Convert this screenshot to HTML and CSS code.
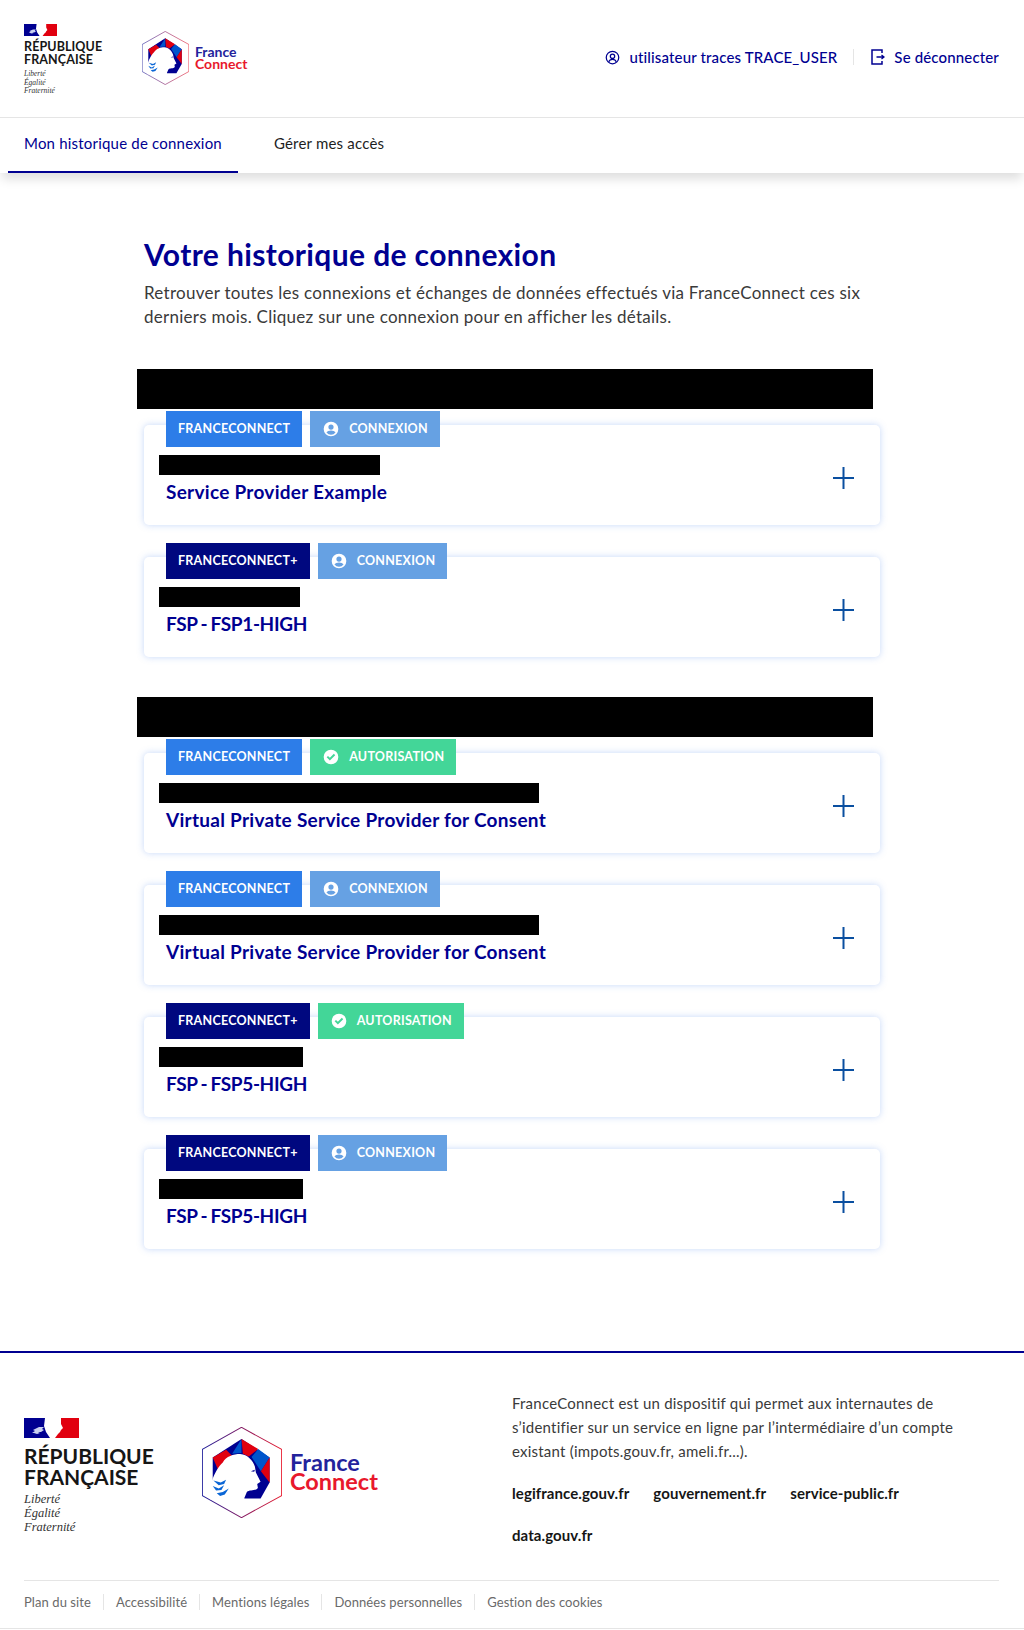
FILE: index.html
```html
<!DOCTYPE html>
<html lang="fr">
<head>
    <meta charset="utf-8">
    <title>Votre historique de connexion - FranceConnect</title>
    <link rel="stylesheet" href="styles.css">
</head>
<body>
    <svg class="defs" width="0" height="0">
        <defs>
            <linearGradient id="hexStroke" x1="0" y1="0" x2="1" y2="0">
                <stop offset="0" stop-color="#1c1c9a"/>
                <stop offset="1" stop-color="#e8182c"/>
            </linearGradient>
            <symbol id="flag" viewBox="0 0 55 20">
                <path d="M0 0h21l-1 8 2 6 4 6H0z" fill="#000091"/>
                <path d="M37 0h18v20H31l3-4 2-2 1-2 2-2-2-4z" fill="#e1000f"/>
                <path d="M11 11l4-2 5 0-2 2 2 1-3 2-3 0 2 1-3 1-3-1-2 0 3-2-2-1z" fill="#c9d0f0"/>
            </symbol>
            <symbol id="fcHex" viewBox="-10 -16 239 272">
                <polygon points="108,-15 228,51 228,189 108,255 -9,189 -9,51" fill="none" stroke="url(#hexStroke)" stroke-width="3"/>
                <polygon points="108,20 192,75 192,150 165,198 118,198 22,150 22,75" fill="#000091"/>
                <polygon points="22,75 62,52 82,72 50,92 38,112" fill="#e1000f"/>
                <polygon points="108,20 80,64 108,62" fill="#0055cc"/>
                <polygon points="108,20 158,50 130,72 112,64" fill="#e1000f"/>
                <polygon points="158,50 192,75 166,116 138,74" fill="#0055cc"/>
                <polygon points="192,75 192,150 166,116" fill="#e1000f"/>
                <path d="M20 144 C28 122 40 100 52 90 C62 72 84 65 104 65 C126 67 142 84 148 102 L151 120 L165 148 L155 154 L157 166 C150 176 132 170 124 178 L114 202 L16 202 Z" fill="#fff"/>
                <path d="M24 144 L46 150 L62 142 L56 154 L40 158 Z M22 160 L40 168 L56 158 L48 172 L32 174 Z M34 182 L52 178 L70 168 L58 186 L44 190 Z" fill="#0a66d6"/>
                <path d="M136 116 L148 112 L146 118 Z" fill="#000091"/>
            </symbol>
            <symbol id="userCircle" viewBox="0 0 24 24">
                <path fill="#fff" d="M12 1a11 11 0 1 0 0 22 11 11 0 0 0 0-22zm0 4.200a3.900 3.900 0 1 1 0 7.800 3.900 3.900 0 0 1 0-7.800zm0 15.400a8.600 8.600 0 0 1-6.800-3.400c.9-2 3.900-3 6.800-3s5.900 1 6.800 3a8.600 8.600 0 0 1-6.800 3.400z"/>
            </symbol>
            <symbol id="checkCircle" viewBox="0 0 24 24">
                <path fill="#fff" d="M12 1a11 11 0 1 0 0 22 11 11 0 0 0 0-22zm-1.700 16.200l-4.800-4.800 2-2 2.800 2.800 6-6 2 2z"/>
            </symbol>
            <symbol id="plus" viewBox="0 0 22 22">
                <path d="M0 11h21M10.500 0v22" fill="none" stroke="#0a4fa0" stroke-width="2"/>
            </symbol>
        </defs>
    </svg>

    <header class="top-header">
        <div class="brand">
            <div class="marianne">
                <svg class="flag"><use href="#flag"/></svg>
                <div class="rf-name">RÉPUBLIQUE<br>FRANÇAISE</div>
                <div class="rf-motto">Liberté<br>Égalité<br>Fraternité</div>
            </div>
            <svg class="hex"><use href="#fcHex"/></svg>
            <div class="fc-name"><span class="fc-france">France</span><span class="fc-connect">Connect</span></div>
        </div>
        <div class="user-box">
            <a class="user-link" href="#">
                <svg class="user-icon" viewBox="0 0 24 24">
                    <circle cx="12" cy="12" r="10" fill="none" stroke="#000091" stroke-width="2"/>
                    <circle cx="12" cy="10" r="3.500" fill="none" stroke="#000091" stroke-width="2"/>
                    <path d="M6 19c1-3 3.500-4 6-4s5 1 6 4" fill="none" stroke="#000091" stroke-width="2"/>
                </svg>
                utilisateur traces TRACE_USER
            </a>
            <span class="user-sep"></span>
            <a class="user-link" href="#">
                <svg class="logout-icon" viewBox="0 0 14 16">
                    <path d="M11 4V1H1v14h10v-3" fill="none" stroke="#000091" stroke-width="1.500"/>
                    <path d="M5.500 8H13M10.500 6l2.500 2-2.500 2" fill="none" stroke="#000091" stroke-width="1.300"/>
                </svg>
                Se déconnecter
            </a>
        </div>
    </header>

    <nav class="tabs">
        <a class="tab tab-active" href="#">Mon historique de connexion</a>
        <a class="tab" href="#">Gérer mes accès</a>
    </nav>

    <main class="content">
        <h1>Votre historique de connexion</h1>
        <p class="intro">Retrouver toutes les connexions et échanges de données effectués via FranceConnect ces six derniers mois. Cliquez sur une connexion pour en afficher les détails.</p>

        <div class="redacted month-bar"></div>
        <section class="card">
            <div class="card-body">
                <div class="badges">
                    <span class="badge badge-fc">FranceConnect</span>
                    <span class="badge badge-login"><svg class="badge-icon"><use href="#userCircle"/></svg>Connexion</span>
                </div>
                <div class="redacted date-bar w-short"></div>
                <div class="sp-name">Service Provider Example</div>
            </div>
            <svg class="plus"><use href="#plus"/></svg>
        </section>
        <section class="card">
            <div class="card-body">
                <div class="badges">
                    <span class="badge badge-fcplus">FranceConnect+</span>
                    <span class="badge badge-login"><svg class="badge-icon"><use href="#userCircle"/></svg>Connexion</span>
                </div>
                <div class="redacted date-bar w-tiny"></div>
                <div class="sp-name sp-fsp">FSP - FSP1-HIGH</div>
            </div>
            <svg class="plus"><use href="#plus"/></svg>
        </section>

        <div class="redacted month-bar"></div>
        <section class="card">
            <div class="card-body">
                <div class="badges">
                    <span class="badge badge-fc">FranceConnect</span>
                    <span class="badge badge-auth"><svg class="badge-icon"><use href="#checkCircle"/></svg>Autorisation</span>
                </div>
                <div class="redacted date-bar w-long"></div>
                <div class="sp-name">Virtual Private Service Provider for Consent</div>
            </div>
            <svg class="plus"><use href="#plus"/></svg>
        </section>
        <section class="card">
            <div class="card-body">
                <div class="badges">
                    <span class="badge badge-fc">FranceConnect</span>
                    <span class="badge badge-login"><svg class="badge-icon"><use href="#userCircle"/></svg>Connexion</span>
                </div>
                <div class="redacted date-bar w-long"></div>
                <div class="sp-name">Virtual Private Service Provider for Consent</div>
            </div>
            <svg class="plus"><use href="#plus"/></svg>
        </section>
        <section class="card">
            <div class="card-body">
                <div class="badges">
                    <span class="badge badge-fcplus">FranceConnect+</span>
                    <span class="badge badge-auth"><svg class="badge-icon"><use href="#checkCircle"/></svg>Autorisation</span>
                </div>
                <div class="redacted date-bar w-mid"></div>
                <div class="sp-name sp-fsp">FSP - FSP5-HIGH</div>
            </div>
            <svg class="plus"><use href="#plus"/></svg>
        </section>
        <section class="card">
            <div class="card-body">
                <div class="badges">
                    <span class="badge badge-fcplus">FranceConnect+</span>
                    <span class="badge badge-login"><svg class="badge-icon"><use href="#userCircle"/></svg>Connexion</span>
                </div>
                <div class="redacted date-bar w-mid"></div>
                <div class="sp-name sp-fsp">FSP - FSP5-HIGH</div>
            </div>
            <svg class="plus"><use href="#plus"/></svg>
        </section>
    </main>

    <footer class="site-footer">
        <div class="footer-top">
            <div class="footer-brand">
                <div class="marianne-big">
                    <svg class="flag-big"><use href="#flag"/></svg>
                    <div class="rf-name-big">RÉPUBLIQUE<br>FRANÇAISE</div>
                    <div class="rf-motto-big">Liberté<br>Égalité<br>Fraternité</div>
                </div>
                <svg class="hex-big"><use href="#fcHex"/></svg>
                <div class="fc-name-big"><span class="fc-france">France</span><span class="fc-connect">Connect</span></div>
            </div>
            <div class="footer-about">
                <p>FranceConnect est un dispositif qui permet aux internautes de s’identifier sur un service en ligne par l’intermédiaire d’un compte existant (impots.gouv.fr, ameli.fr...).</p>
                <div class="footer-links">
                    <a href="#">legifrance.gouv.fr</a>
                    <a href="#">gouvernement.fr</a>
                    <a href="#">service-public.fr</a>
                    <a href="#">data.gouv.fr</a>
                </div>
            </div>
        </div>
        <ul class="footer-bottom">
            <li><a href="#">Plan du site</a></li>
            <li><a href="#">Accessibilité</a></li>
            <li><a href="#">Mentions légales</a></li>
            <li><a href="#">Données personnelles</a></li>
            <li><a href="#">Gestion des cookies</a></li>
        </ul>
    </footer>
</body>
</html>
```

FILE: styles.css
```css
html,
body {
    margin: 0;
    padding: 0;
}

body {
    background: #fff;
    color: #3a3a3a;
    font-family: "Lato", "Liberation Sans", sans-serif;
}

a {
    color: inherit;
    text-decoration: none;
}

.defs {
    display: block;
    height: 0;
}

/* Header */
.top-header {
    height: 117px;
    display: flex;
    justify-content: space-between;
    border-bottom: 1px solid #e5e5e5;
    padding: 0 25px 0 24px;
}

.brand {
    display: flex;
    align-items: flex-start;
}

.marianne {
    width: 118px;
    padding-top: 24px;
}

.flag {
    display: block;
    width: 33px;
    height: 12px;
}

.rf-name {
    margin-top: 4px;
    font-size: 12.5px;
    font-weight: 700;
    line-height: 13px;
    letter-spacing: 0.1px;
    color: #161616;
}

.rf-motto {
    margin-top: 4px;
    font-family: "Liberation Serif", serif;
    font-style: italic;
    font-size: 7.5px;
    line-height: 8.500px;
    color: #333;
}

.hex {
    width: 47px;
    height: 54px;
    margin-top: 31px;
}

.fc-name {
    margin: 46px 0 0 6px;
    font-size: 14px;
    font-weight: 700;
    line-height: 12px;
}

.fc-france,
.fc-connect {
    display: block;
}

.fc-france {
    color: #23239c;
}

.fc-connect {
    color: #e8182c;
}

.user-box {
    display: flex;
    align-items: center;
    height: 114px;
    color: #000091;
    font-size: 15px;
    letter-spacing: 0.15px;
}

.user-link {
    display: flex;
    align-items: center;
    font-weight: 500;
}

.user-icon {
    width: 15px;
    height: 15px;
    margin-right: 9px;
}

.logout-icon {
    width: 14px;
    height: 16px;
    margin-right: 9px;
}

.user-sep {
    width: 1px;
    height: 16px;
    margin: 0 17px 0 16px;
    background: #e5e5e5;
}

/* Tabs */
.tabs {
    display: flex;
    height: 55px;
    padding-left: 8px;
    background: #fff;
    box-shadow: 0 8px 10px -2px rgba(0, 0, 0, 0.13);
    font-size: 15px;
    letter-spacing: 0.2px;
}

.tab {
    display: flex;
    align-items: center;
    padding: 0 16px 3px;
    margin-right: 20px;
    color: #1e1e1e;
    border-bottom: 2px solid transparent;
}

.tab-active {
    color: #000091;
    border-bottom-color: #000091;
}

/* Main */
.content {
    width: 736px;
    margin-left: 144px;
    padding-top: 63px;
    padding-bottom: 70px;
}

h1 {
    margin: 0;
    font-size: 30px;
    line-height: 36px;
    font-weight: 700;
    letter-spacing: 0.38px;
    color: #000091;
}

.intro {
    margin: 9px 0 0;
    font-size: 17px;
    line-height: 24px;
    letter-spacing: 0.27px;
    width: 730px;
}

.redacted {
    background: #000;
}

.month-bar {
    height: 40px;
    margin: 40px 7px 16px -7px;
}

.card {
    display: flex;
    justify-content: space-between;
    align-items: center;
    height: 100px;
    margin-bottom: 32px;
    padding: 0 25px 0 22px;
    background: #fff;
    border-radius: 5px;
    box-shadow: 0 0 7px rgba(90, 140, 235, 0.35);
}

.card:has(+ .month-bar) {
    margin-bottom: 0;
}

.card-body {
    align-self: flex-start;
}

.badges {
    display: flex;
    gap: 8px;
    margin-top: -14px;
}

.badge {
    display: flex;
    align-items: center;
    height: 35px;
    padding: 0 12px 1px;
    color: #fff;
    font-size: 12.5px;
    font-weight: 700;
    letter-spacing: 0.25px;
    text-transform: uppercase;
}

.badge-fc {
    background: #2d7de8;
}

.badge-fcplus {
    background: #00087f;
}

.badge-login {
    background: #66a1e3;
}

.badge-auth {
    background: #43d698;
}

.badge-icon {
    width: 16px;
    height: 16px;
    margin: 1px 10px 0 1px;
}

.date-bar {
    height: 20px;
    margin: 8px 0 0 -7px;
}

.w-short {
    width: 221px;
}

.w-tiny {
    width: 141px;
}

.w-mid {
    width: 144px;
}

.w-long {
    width: 380px;
}

.sp-name {
    margin-top: 5px;
    font-size: 19px;
    line-height: 24px;
    font-weight: 700;
    letter-spacing: 0.28px;
    color: #000091;
}

.sp-fsp {
    letter-spacing: -0.35px;
    word-spacing: -1px;
}

.plus {
    width: 22px;
    height: 22px;
    margin-top: 6px;
}

/* Footer */
.site-footer {
    border-top: 2px solid #000091;
    border-bottom: 1px solid #e5e5e5;
    padding: 0 25px 0 24px;
}

.footer-top {
    display: flex;
    justify-content: space-between;
    height: 227px;
    border-bottom: 1px solid #e5e5e5;
}

.footer-brand {
    display: flex;
    align-items: flex-start;
}

.marianne-big {
    width: 178px;
    padding-top: 65px;
}

.flag-big {
    display: block;
    width: 55px;
    height: 20px;
}

.rf-name-big {
    margin-top: 7px;
    font-size: 21px;
    line-height: 21px;
    font-weight: 700;
    color: #161616;
}

.rf-motto-big {
    margin-top: 5px;
    font-family: "Liberation Serif", serif;
    font-style: italic;
    font-size: 12.5px;
    line-height: 14px;
    color: #333;
}

.hex-big {
    width: 80px;
    height: 91px;
    margin-top: 74px;
}

.fc-name-big {
    margin: 100px 0 0 8px;
    font-size: 23.5px;
    line-height: 19px;
    font-weight: 700;
}

.footer-about {
    width: 487px;
    padding-top: 38px;
    font-size: 15px;
    line-height: 24px;
}

.footer-about p {
    margin: 0;
    width: 450px;
    letter-spacing: 0.22px;
}

.footer-links {
    display: flex;
    flex-wrap: wrap;
    column-gap: 24px;
    row-gap: 18px;
    width: 440px;
    margin-top: 18px;
}

.footer-links a {
    color: #161616;
    font-weight: 700;
    letter-spacing: 0.08px;
}

.footer-bottom {
    display: flex;
    list-style: none;
    margin: 0;
    padding: 13px 0 18px;
    font-size: 13px;
    line-height: 16px;
    letter-spacing: 0.08px;
    color: #6a6a6a;
}

.footer-bottom li {
    padding: 0 12px;
    border-left: 1px solid #e5e5e5;
}

.footer-bottom li:first-child {
    padding-left: 0;
    border-left: 0;
}
```
